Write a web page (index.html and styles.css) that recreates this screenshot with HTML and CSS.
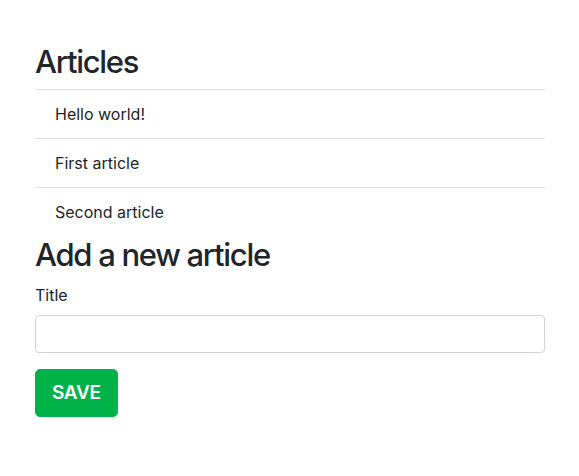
FILE: index.html
```html
<!DOCTYPE html>
<html>
<head>
<meta charset="utf-8">
<link rel="stylesheet" href="styles.css">
</head>
<body>
<div class="page">
  <h2 class="heading">Articles</h2>
  <ul class="list">
    <li class="item">Hello world!</li>
    <li class="item">First article</li>
    <li class="item">Second article</li>
  </ul>
  <h2 class="heading">Add a new article</h2>
  <form class="form">
    <div class="group">
      <label class="label" for="title">Title</label>
      <input class="input" id="title" type="text">
    </div>
    <button class="btn" type="button">SAVE</button>
  </form>
</div>
</body>
</html>
```
FILE: styles.css
```css
html, body {
  margin: 0;
  padding: 0;
  background: #fff;
}
body {
  font-family: Inter, "Liberation Sans", Arial, sans-serif;
  font-size: 16px;
  line-height: 1.5;
  color: #212529;
}
.page {
  width: 510px;
  padding: 43px 0 0 35px;
}
.heading {
  margin: 0 0 8px 0;
  font-size: 31px;
  line-height: 38.4px;
  font-weight: 500;
  letter-spacing: -1.3px;
  color: #212529;
}
.list {
  list-style: none;
  margin: 0;
  padding: 0;
}
.item {
  padding: 12px 20px;
  line-height: 24px;
  border-top: 1px solid rgba(0,0,0,0.125);
}
.form {
  margin: 0;
}
.group {
  display: flex;
  flex-direction: column;
  margin-bottom: 16px;
}
.label {
  margin-bottom: 8px;
  line-height: 24px;
}
.input {
  box-sizing: border-box;
  height: 38px;
  width: 100%;
  border: 1px solid #ced4da;
  border-radius: 4px;
  padding: 6px 12px;
  font: inherit;
  outline: none;
}
.btn {
  display: block;
  height: 48px;
  padding: 0 16px;
  border: 1px solid #00b247;
  background: #00b247;
  color: #fff;
  font-family: Inter, "Liberation Sans", Arial, sans-serif;
  font-size: 19px;
  font-weight: 600;
  letter-spacing: -0.3px;
  border-radius: 5px;
  cursor: pointer;
}
```
